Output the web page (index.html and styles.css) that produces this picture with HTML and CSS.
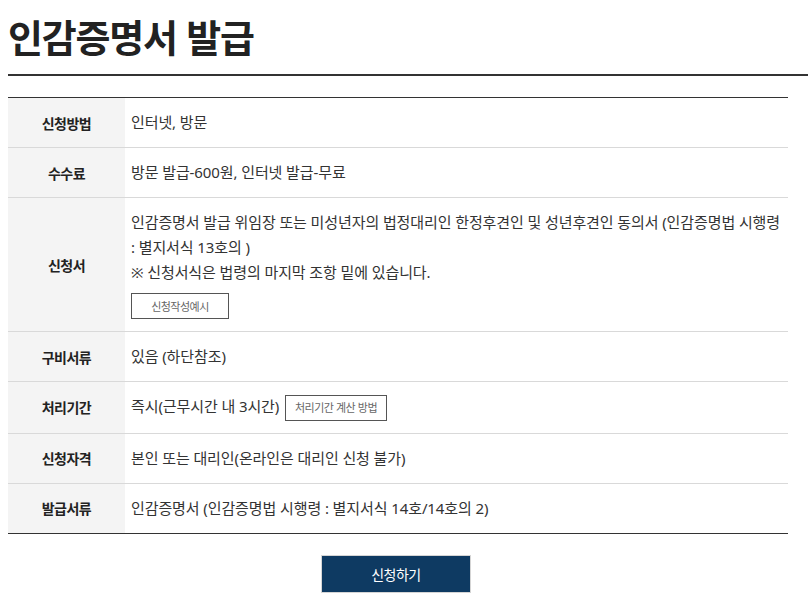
FILE: index.html
```html
<!DOCTYPE html>
<html lang="ko">
<head>
<meta charset="utf-8">
<title>인감증명서 발급</title>
<link rel="stylesheet" href="styles.css">
</head>
<body>
<div class="page">
  <h1 class="title">인감증명서 발급</h1>
  <div class="info">
    <div class="row">
      <div class="th">신청방법</div>
      <div class="td">인터넷, 방문</div>
    </div>
    <div class="row">
      <div class="th">수수료</div>
      <div class="td">방문 발급-600원, 인터넷 발급-무료</div>
    </div>
    <div class="row">
      <div class="th">신청서</div>
      <div class="td">
        <p class="line">인감증명서 발급 위임장 또는 미성년자의 법정대리인 한정후견인 및 성년후견인 동의서 (인감증명법 시행령 : 별지서식 13호의 )</p>
        <p class="line">※ 신청서식은 법령의 마지막 조항 밑에 있습니다.</p>
        <a class="sbtn sbtn-form">신청작성예시</a>
      </div>
    </div>
    <div class="row">
      <div class="th">구비서류</div>
      <div class="td">있음 (하단참조)</div>
    </div>
    <div class="row">
      <div class="th">처리기간</div>
      <div class="td">즉시(근무시간 내 3시간) <a class="sbtn sbtn-calc">처리기간 계산 방법</a></div>
    </div>
    <div class="row">
      <div class="th">신청자격</div>
      <div class="td">본인 또는 대리인(온라인은 대리인 신청 불가)</div>
    </div>
    <div class="row">
      <div class="th">발급서류</div>
      <div class="td">인감증명서 (인감증명법 시행령 : 별지서식 14호/14호의 2)</div>
    </div>
  </div>
  <div class="actions">
    <a class="apply">신청하기</a>
  </div>
</div>
</body>
</html>
```
FILE: styles.css
```css
* { box-sizing: border-box; }
html, body { margin: 0; padding: 0; background: #fff; }
body {
  font-family: "Noto Sans CJK KR", "Noto Sans", sans-serif;
  color: #333;
  padding: 8px 0 0 8px;
}
.page { width: 800px; }
.title {
  margin: 0;
  font-size: 38px;
  font-weight: 700;
  letter-spacing: -1.2px;
  color: #222;
  line-height: 50px;
  padding-top: 3px;
  padding-bottom: 13px;
  border-bottom: 2px solid #333;
}
.info {
  width: 780px;
  margin-top: 21px;
  border-top: 1px solid #333;
  border-bottom: 1px solid #333;
}
.row {
  display: flex;
  border-bottom: 1px solid #d9d9d9;
}
.row:last-child { border-bottom: 0; }
.th {
  width: 117px;
  flex: none;
  background: #f4f4f4;
  display: flex;
  align-items: center;
  justify-content: center;
  font-size: 14px;
  font-weight: 700;
  color: #222;
  letter-spacing: -0.5px;
}
.td {
  flex: 1;
  padding: 12px 4px 12px 6px;
  font-family: "Noto Sans", "Noto Sans CJK KR", sans-serif;
  font-size: 15px;
  line-height: 25px;
  letter-spacing: -0.1px;
  color: #333;
}
.line { margin: 0; }
.sbtn {
  display: inline-flex;
  align-items: center;
  justify-content: center;
  height: 26px;
  border: 1px solid #555;
  font-family: "Noto Sans CJK KR", sans-serif;
  font-size: 11px;
  color: #666;
  letter-spacing: -0.5px;
  background: #fff;
}
.sbtn-form { width: 98px; margin-top: 8px; }
.sbtn-calc { width: 102px; margin-left: 2px; vertical-align: middle; }
.actions {
  width: 780px;
  display: flex;
  justify-content: center;
  padding-top: 21px;
}
.apply {
  display: flex;
  align-items: center;
  justify-content: center;
  width: 150px;
  height: 38px;
  background: #0e3a62;
  border: 1px solid #d5d5d5;
  color: #fff;
  font-size: 14px;
  letter-spacing: -0.5px;
  margin-left: -4px;
}
```
